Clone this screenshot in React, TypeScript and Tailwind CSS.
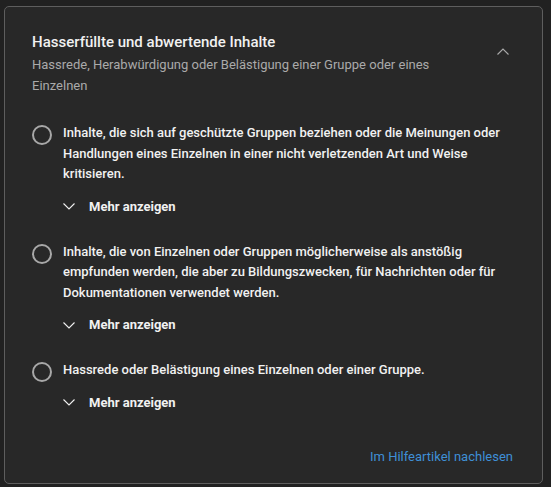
const items = [
  "Inhalte, die sich auf geschützte Gruppen beziehen oder die Meinungen oder Handlungen eines Einzelnen in einer nicht verletzenden Art und Weise kritisieren.",
  "Inhalte, die von Einzelnen oder Gruppen möglicherweise als anstößig empfunden werden, die aber zu Bildungszwecken, für Nachrichten oder für Dokumentationen verwendet werden.",
  "Hassrede oder Belästigung eines Einzelnen oder einer Gruppe.",
];

function Chevron({ up, className }: { up?: boolean; className?: string }) {
  return (
    <svg viewBox="0 0 12 7" className={className} fill="none" stroke="currentColor" strokeWidth="1.1">
      {up ? <path d="M0.5 6.5 L6 1 L11.5 6.5" /> : <path d="M0.5 0.5 L6 6 L11.5 0.5" />}
    </svg>
  );
}

export default function App() {
  return (
    <div className="h-[487px] w-[551px] bg-[#212121] pl-[4px] pt-[6px] font-['Roboto',sans-serif]">
      <div className="flex h-[478px] w-[539px] flex-col rounded-[5px] border border-[#5e5e5e] bg-[#282828] px-[27px] pt-[24px]">
        <div className="flex">
          <div className="flex-1">
            <h2 className="text-[15px] font-medium leading-[22px] text-[#f1f1f1]">
              Hasserfüllte und abwertende Inhalte
            </h2>
            <p className="mt-[1px] pr-[60px] text-[13px] leading-[21px] text-[#aaaaaa]">
              Hassrede, Herabwürdigung oder Belästigung einer Gruppe oder eines Einzelnen
            </p>
          </div>
          <div className="mt-[8px] flex h-6 w-6 items-center justify-center text-[#aaaaaa]">
            <Chevron up className="h-[7px] w-[12px]" />
          </div>
        </div>

        <div className="mt-[27px] flex flex-col gap-[25px]">
          {items.map((text) => (
            <div key={text} className="flex gap-[11px]">
              <div className="mt-[2px] h-[20px] w-[20px] shrink-0 rounded-full border-2 border-[#a8a8a8]" />
              <div className="flex-1">
                <p className="text-[13px] font-medium leading-[20.5px] text-[#f1f1f1]">{text}</p>
                <button className="mt-[12px] flex h-[20px] items-center gap-[14px] text-[13px] font-bold text-[#f1f1f1]">
                  <Chevron className="h-[7px] w-[12px]" />
                  Mehr anzeigen
                </button>
              </div>
            </div>
          ))}
        </div>

        <div className="mt-[34px] flex justify-end pr-[2px]">
          <a className="text-[13px] leading-[20px] text-[#3f8fd6]">Im Hilfeartikel nachlesen</a>
        </div>
      </div>
    </div>
  );
}
